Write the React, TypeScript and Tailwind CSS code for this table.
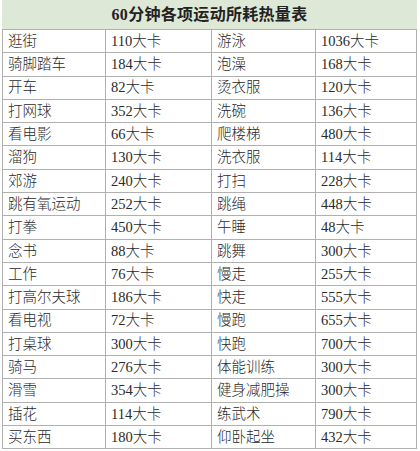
import React from 'react';

const rows: [string, string, string, string][] = [
  ['逛街', '110大卡', '游泳', '1036大卡'],
  ['骑脚踏车', '184大卡', '泡澡', '168大卡'],
  ['开车', '82大卡', '烫衣服', '120大卡'],
  ['打网球', '352大卡', '洗碗', '136大卡'],
  ['看电影', '66大卡', '爬楼梯', '480大卡'],
  ['溜狗', '130大卡', '洗衣服', '114大卡'],
  ['郊游', '240大卡', '打扫', '228大卡'],
  ['跳有氧运动', '252大卡', '跳绳', '448大卡'],
  ['打拳', '450大卡', '午睡', '48大卡'],
  ['念书', '88大卡', '跳舞', '300大卡'],
  ['工作', '76大卡', '慢走', '255大卡'],
  ['打高尔夫球', '186大卡', '快走', '555大卡'],
  ['看电视', '72大卡', '慢跑', '655大卡'],
  ['打桌球', '300大卡', '快跑', '700大卡'],
  ['骑马', '276大卡', '体能训练', '300大卡'],
  ['滑雪', '354大卡', '健身减肥操', '300大卡'],
  ['插花', '114大卡', '练武术', '790大卡'],
  ['买东西', '180大卡', '仰卧起坐', '432大卡'],
];

export default function App() {
  return (
    <div className="w-[420px] h-[451px] bg-white font-['Liberation_Serif','Noto_Sans_CJK_SC',serif] text-[#2a2a2a]">
      <div className="ml-[2px] w-[415px] bg-[#b0b0b0] grid gap-px pb-px px-px">
        <div className="h-[29px] -mx-px bg-[#dde9d6] flex items-center justify-center text-[16px] font-bold tracking-[0.3px] text-[#222]">
          60分钟各项运动所耗热量表
        </div>
        <div className="grid grid-cols-[102px_105px_103px_100px] grid-rows-[repeat(18,22.3px)] gap-px">
          {rows.map((r, i) =>
            r.map((c, j) => (
              <div key={`${i}-${j}`} className="bg-white flex items-center pl-[5px] text-[14.5px] leading-none font-light">
                {c}
              </div>
            ))
          )}
        </div>
      </div>
    </div>
  );
}
